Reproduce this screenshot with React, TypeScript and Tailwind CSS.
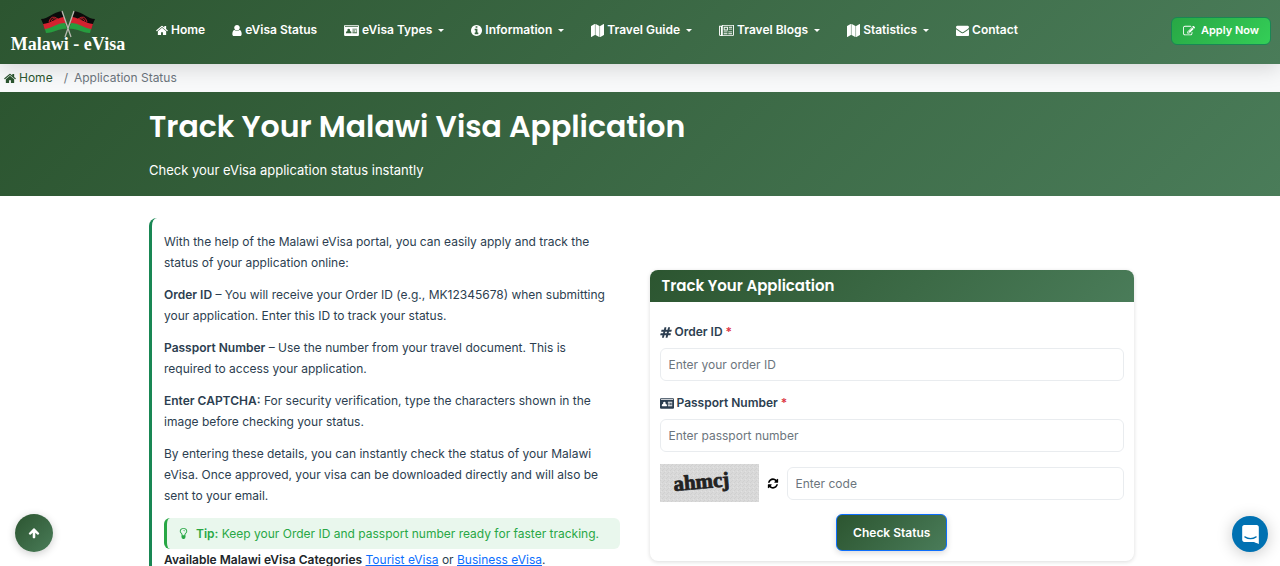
import React from "react";

type IconProps = { className?: string };

function Glyph({ d, className = "size-[13px]", box = "0 0 1792 1792" }: { d: string; className?: string; box?: string }) {
  return (
    <svg viewBox={box} fill="currentColor" fillRule="evenodd" aria-hidden="true" className={`shrink-0 ${className}`}>
      <path d={d} />
    </svg>
  );
}

const HOME =
  "M1472 992v480q0 26-19 45t-45 19h-384v-384h-256v384h-384q-26 0-45-19t-19-45v-480q0-1 .5-3t.5-3l575-474 575 474q1 2 1 6zm223-69l-62 74q-8 9-21 11h-3q-13 0-21-7l-692-577-692 577q-12 8-24 7-13-2-21-11l-62-74q-8-10-7-23.5t11-21.5l719-599q32-26 76-26t76 26l244 204v-195q0-14 9-23t23-9h192q14 0 23 9t9 23v408l219 182q10 8 11 21.5t-7 23.5z";
const USER =
  "M1536 1399q0 109-62.5 187t-150.5 78h-854q-88 0-150.5-78t-62.5-187q0-85 8.5-160.5t31.5-152 58.5-131 94-89 134.5-34.5q131 128 313 128t313-128q76 0 134.5 34.5t94 89 58.5 131 31.5 152 8.5 160.5zm-256-887q0 159-112.5 271.5t-271.500 112.500-271.500-112.500-112.500-271.500 112.500-271.500 271.500-112.500 271.500 112.500 112.500 271.500z";
const INFO =
  "M1152 1376v-160q0-14-9-23t-23-9h-96v-512q0-14-9-23t-23-9h-320q-14 0-23 9t-9 23v160q0 14 9 23t23 9h96v320h-96q-14 0-23 9t-9 23v160q0 14 9 23t23 9h448q14 0 23-9t9-23zm-128-896v-160q0-14-9-23t-23-9h-192q-14 0-23 9t-9 23v160q0 14 9 23t23 9h192q14 0 23-9t9-23zm640 416q0 209-103 385.500t-279.500 279.500-385.500 103-385.500-103-279.500-279.500-103-385.500 103-385.500 279.500-279.500 385.500-103 385.500 103 279.500 279.500 103 385.500z";
const MAP =
  "M512 0q13 0 22.500 9.500t9.500 22.500v1472q0 20-17 28l-480 256q-7 4-15 4-13 0-22.500-9.500T0 1760V288q0-20 17-28L497 4q7-4 15-4zM1760 0q13 0 22.500 9.500t9.500 22.500v1472q0 20-17 28l-480 256q-7 4-15 4-13 0-22.500-9.500t-9.500-22.500V288q0-20 17-28l480-256q7-4 15-4zM640 0q8 0 14 3l512 256q18 10 18 29v1472q0 13-9.500 22.500t-22.500 9.500q-8 0-14-3l-512-256q-18-10-18-29V32q0-13 9.500-22.500T640 0z";
const ENVELOPE =
  "M1792 710v794q0 66-47 113t-113 47h-1472q-66 0-113-47t-47-113v-794q44 49 101 87 362 246 497 345 57 42 92.500 65.500t94.500 48 110 24.500h2q51 0 110-24.500t94.500-48 92.500-65.500q170-123 498-345 57-39 100-87zm0-294q0 79-49 151t-122 123q-376 261-468 325-10 7-42.500 30.500t-54 38-52 32.500-57.500 27-50 9h-2q-23 0-50-9t-57.500-27-52-32.500-54-38-42.500-30.500q-91-64-262-182.500t-205-142.500q-62-42-117-115.500t-55-136.500q0-78 41.500-130t118.500-52h1472q65 0 112.500 47t47.500 113z";
const EDIT =
  "M888 1184l116-116-152-152-116 116v56h96v96h56zm440-720q-16-16-33 1l-350 350q-17 17-1 33t33-1l350-350q17-17 1-33zm80 594v190q0 119-84.500 203.500t-203.500 84.500h-832q-119 0-203.500-84.500t-84.500-203.500v-832q0-119 84.500-203.500t203.500-84.500h832q63 0 117 25 15 7 18 23 3 17-9 29l-49 49q-14 14-32 8-23-6-45-6h-832q-66 0-113 47t-47 113v832q0 66 47 113t113 47h832q66 0 113-47t47-113v-126q0-13 9-22l64-64q15-15 35-7t20 29zm-96-738l288 288-672 672h-288v-288zm444 132l-92 92-288-288 92-92q28-28 68-28t68 28l152 152q28 28 28 68t-28 68z";
const HASH =
  "M991 1024l64-256h-254l-64 256h254zm768-504l-56 224q-7 24-31 24h-327l-64 256h311q15 0 25 12 10 14 6 28l-56 224q-5 24-31 24h-327l-81 328q-7 24-31 24h-224q-16 0-26-12-9-12-6-28l78-312h-254l-81 328q-7 24-31 24h-225q-15 0-25-12-9-12-6-28l78-312h-311q-15 0-25-12-9-12-6-28l56-224q7-24 31-24h327l64-256h-311q-15 0-25-12-10-14-6-28l56-224q5-24 31-24h327l81-328q7-24 32-24h224q15 0 25 12 9 12 6 28l-78 312h254l81-328q7-24 32-24h224q15 0 25 12 9 12 6 28l-78 312h311q15 0 25 12 9 12 6 28z";
const REFRESH =
  "M1639 1056q0 5-1 7-64 268-268 434.500t-478 166.500q-146 0-282.500-55t-243.500-157l-129 129q-19 19-45 19t-45-19-19-45v-448q0-26 19-45t45-19h448q26 0 45 19t19 45-19 45l-137 137q71 66 161 102t187 36q134 0 250-65t186-179q11-17 53-117 8-23 30-23h192q13 0 22.500 9.500t9.500 22.500zm25-800v448q0 26-19 45t-45 19h-448q-26 0-45-19t-19-45 19-45l138-138q-148-137-349-137-134 0-250 65t-186 179q-11 17-53 117-8 23-30 23h-199q-13 0-22.500-9.500t-9.500-22.500v-7q65-268 270-434.500t480-166.500q146 0 284 55.500t245 156.500l130-129q19-19 45-19t45 19 19 45z";
const ARROW_UP =
  "M1675 971q0 51-37 90l-75 75q-38 38-91 38-54 0-90-38l-294-293v704q0 52-37.500 84.500t-90.500 32.500h-128q-53 0-90.500-32.500t-37.500-84.500v-704l-294 293q-36 38-90 38t-90-38l-75-75q-38-38-38-90 0-53 38-91l651-651q35-37 90-37 54 0 91 37l651 651q37 39 37 91z";
const BULB =
  "M1120 576q0 13-9.500 22.500t-22.500 9.500-22.500-9.500-9.500-22.500q0-46-54-71t-106-25q-13 0-22.500-9.500t-9.500-22.500 9.500-22.500 22.500-9.500q50 0 99.500 16t87 54 37.500 90zm160 0q0-72-34.500-134t-90-101.500-123-62-136.500-22.500-136.500 22.500-123 62-90 101.500-34.500 134q0 101 68 180 10 11 30.500 33t30.500 33q128 153 141 298h228q13-145 141-298 10-11 30.500-33t30.500-33q68-79 68-180zm128 0q0 155-103 268-45 49-74.500 87t-59.500 95.500-34 107.500q47 28 47 82 0 37-25 64 25 27 25 64 0 52-45 81 13 23 13 47 0 46-31.500 71t-77.500 25q-20 44-60 70t-87 26-87-26-60-70q-46 0-77.500-25t-31.500-71q0-24 13-47-45-29-45-81 0-37 25-64-25-27-25-64 0-54 47-82-4-50-34-107.500t-59.500-95.500-74.500-87q-103-113-103-268 0-99 44.500-184.500t117-142 164-89 186.500-32.500 186.500 32.500 164 89 117 142 44.500 184.500z";
const ID_CARD =
  "M150 128h1748q150 0 150 150v1236q0 150-150 150H150Q0 1664 0 1514V278q0-150 150-150zM128 256v128h1792V256zM640 640a190 190 0 0 0-150 310q-234 20-234 260 0 70 70 70h628q70 0 70-70 0-240-234-260a190 190 0 0 0-150-310zM1152 640v128h640V640zM1152 896v128h384V896zM1632 896v128h160V896zM1152 1152v128h640v-128z";
const NEWSPAPER =
  "M384 128h1664v1344q0 192-192 192H192Q0 1664 0 1472V256h384zM128 384v1088q0 64 64 64t64-64V384zM512 256v1216q0 34-11 64h1355q64 0 64-64V256zM640 384h576v512H640zM768 512v256h320V512zM1344 384h448v128h-448zM1344 640h448v128h-448zM640 1024h512v128H640zM1280 1024h512v128h-512zM640 1280h512v128H640zM1280 1280h512v128h-512z";

function HomeIcon() {
  return <Glyph d={HOME} box="64 0 1664 1792" className="h-[13px] w-3" />;
}

function IdCard({ className = "h-[13px] w-[15px]" }: IconProps) {
  return <Glyph d={ID_CARD} box="0 0 2048 1792" className={className} />;
}

function Flags() {
  const flag = (
    <>
      <path d="M1 9C8 9 13 2 22 1L24 8C17 9 12 14 4 16Z" fill="#0b0b0b" />
      <path d="M3 14C11 13 16 8 24 7L26 14C18 14 13 19 5 20Z" fill="#d3222f" />
      <path d="M5 19C12 18 17 13 25 13L27 19C19 18 15 23 6 23Z" fill="#279c3f" />
      <path d="M9 12Q11 4 18 9M11 11Q13 7 17 10" fill="none" stroke="#c5222b" strokeWidth="1" />
    </>
  );
  return (
    <svg viewBox="0 0 56 28" className="h-7 w-14" aria-hidden="true">
      <g>{flag}</g>
      <g transform="translate(56 0) scale(-1 1)">{flag}</g>
      <path d="M22 1L31 27M34 1L25 27" stroke="#b8b8b0" strokeWidth="1.3" fill="none" />
    </svg>
  );
}

const navItems: { label: string; icon: React.ReactNode; menu?: boolean }[] = [
  { label: "Home", icon: <HomeIcon /> },
  { label: "eVisa Status", icon: <Glyph d={USER} box="256 0 1280 1792" className="h-[13px] w-[10px]" /> },
  { label: "eVisa Types", icon: <IdCard />, menu: true },
  { label: "Information", icon: <Glyph d={INFO} box="128 0 1536 1792" className="h-[13px] w-[11px]" />, menu: true },
  { label: "Travel Guide", icon: <Glyph d={MAP} />, menu: true },
  { label: "Travel Blogs", icon: <Glyph d={NEWSPAPER} box="0 0 2048 1792" className="h-[13px] w-[15px]" />, menu: true },
  { label: "Statistics", icon: <Glyph d={MAP} />, menu: true },
  { label: "Contact", icon: <Glyph d={ENVELOPE} /> },
];

function Header() {
  const item = "flex items-center gap-[3px] whitespace-nowrap text-xs leading-5 font-semibold";
  return (
    <header className="relative z-10 flex min-h-16 items-center bg-linear-135 from-[#2c5530] to-[#4a7c59] pr-[9px] pl-3 text-white shadow-[0_4px_20px_rgba(0,0,0,0.15)]">
      <a href="#" className="flex w-28 shrink-0 flex-col items-center">
        <Flags />
        <span className="-mt-1 font-['Liberation_Serif',serif] text-lg leading-5 font-bold whitespace-nowrap">Malawi - eVisa</span>
      </a>
      <nav className="mb-1 ml-8 flex flex-1 items-center gap-[27px]">
        {navItems.map(({ label, icon, menu }) =>
          menu ? (
            <button key={label} type="button" className={item}>
              {icon}
              {label}
              <svg viewBox="0 0 6 3" className="ml-[3px] h-[3px] w-[6px]" fill="currentColor" aria-hidden="true">
                <path d="M0 0h6L3 3z" />
              </svg>
            </button>
          ) : (
            <a key={label} href="#" className={item}>
              {icon}
              {label}
            </a>
          )
        )}
      </nav>
      <a
        href="#"
        className="mb-[3px] flex h-7 shrink-0 items-center gap-[6px] rounded-md border border-[#198754] bg-linear-135 from-[#28a745] to-[#34ce57] px-[11px] text-[11px] font-semibold"
      >
        <Glyph d={EDIT} className="size-3" />
        Apply Now
      </a>
    </header>
  );
}

function Breadcrumb() {
  return (
    <nav aria-label="Breadcrumb" className="flex h-7 items-center bg-[#f8f9fa] px-1 text-xs text-[#6c757d]">
      <a href="#" className="flex items-center gap-[3px] text-[#2c5530]">
        <HomeIcon />
        Home
      </a>
      <span className="mr-[6px] ml-[11px]">/</span>
      <span>Application Status</span>
    </nav>
  );
}

function Guide() {
  return (
    <section className="rounded-lg border-l-[3px] border-[#198754] py-[13px] pr-[14px] pl-3 text-xs leading-[21px] text-[#2c3e50]">
      <div className="flex flex-col gap-[11px] pr-2">
        <p>With the help of the Malawi eVisa portal, you can easily apply and track the status of your application online:</p>
        <p>
          <strong className="font-semibold">Order ID</strong> – You will receive your Order ID (e.g., MK12345678) when submitting your application. Enter this ID to track your status.
        </p>
        <p>
          <strong className="font-semibold">Passport Number</strong> – Use the number from your travel document. This is required to access your application.
        </p>
        <p>
          <strong className="font-semibold">Enter CAPTCHA:</strong> For security verification, type the characters shown in the image before checking your status.
        </p>
        <p>By entering these details, you can instantly check the status of your Malawi eVisa. Once approved, your visa can be downloaded directly and will also be sent to your email.</p>
      </div>
      <div className="mt-3 flex items-center rounded-md border-l-[3px] border-[#28a745] bg-[#e9f7ed] px-[10px] py-[5px] text-[#28a745]">
        <Glyph d={BULB} className="mr-[6px] size-[13px]" />
        <p>
          <strong className="font-semibold">Tip:</strong> Keep your Order ID and passport number ready for faster tracking.
        </p>
      </div>
      <p>
        <strong className="font-semibold text-[#212529]">Available Malawi eVisa Categories</strong>{" "}
        <a href="#" className="text-[#0d6efd] underline">Tourist eVisa</a> or{" "}
        <a href="#" className="text-[#0d6efd] underline">Business eVisa</a>.
      </p>
    </section>
  );
}

function Captcha() {
  return (
    <svg viewBox="0 0 99 38" className="h-[38px] w-[99px] shrink-0" role="img" aria-label="Verification code">
      <defs>
        <pattern id="grain" width="4" height="4" patternUnits="userSpaceOnUse">
          <rect width="4" height="4" fill="#d9d9d9" />
          <path d="M0 0h1v1H0zM2 2h1v1H2zM3 1h1v1H3z" fill="#d0d0d0" />
          <path d="M1 3h1v1H1z" fill="#e2e2e2" />
        </pattern>
      </defs>
      <rect width="99" height="38" fill="url(#grain)" />
      <text x="14" y="27" transform="rotate(-5 14 27)" fontFamily="Liberation Serif, serif" fontWeight="700" fontSize="21" fill="#222" stroke="#222" strokeWidth="0.8">
        ahmcj
      </text>
    </svg>
  );
}

const field =
  "h-[33px] w-full min-w-0 rounded-md border border-[#e9ecef] bg-white px-2 text-xs text-[#212529] placeholder:text-[#6c757d]";
const fieldLabel = "flex items-center gap-[3px] text-xs leading-5 font-semibold text-[#2c3e50]";

function TrackForm() {
  return (
    <form className="mt-[52px] overflow-hidden rounded-lg bg-white shadow-[0_1px_4px_rgba(0,0,0,0.14)]" onSubmit={(e) => e.preventDefault()}>
      <h2 className="bg-linear-135 from-[#2c5530] to-[#4a7c59] px-3 py-1 font-['Poppins','Inter',sans-serif] text-[15px] leading-6 font-semibold text-white">
        Track Your Application
      </h2>
      <div className="px-[10px] pt-5 pb-[10px]">
        <label htmlFor="order" className={fieldLabel}>
          <Glyph d={HASH} className="h-[13px] w-3" />
          Order ID <span className="text-[#dc3545]">*</span>
        </label>
        <input id="order" className={`mt-[6px] ${field}`} placeholder="Enter your order ID" />
        <label htmlFor="passport" className={`mt-3 ${fieldLabel}`}>
          <IdCard className="h-[13px] w-[14px]" />
          Passport Number <span className="text-[#dc3545]">*</span>
        </label>
        <input id="passport" className={`mt-[6px] ${field}`} placeholder="Enter passport number" />
        <div className="mt-3 flex items-center">
          <Captcha />
          <button type="button" aria-label="Refresh code" className="mx-2 text-black">
            <Glyph d={REFRESH} className="h-[13px] w-3" />
          </button>
          <input aria-label="Enter code" className={field} placeholder="Enter code" />
        </div>
        <button
          type="submit"
          className="mx-auto mt-3 block h-[37px] rounded-md border border-[#0d6efd] bg-linear-135 from-[#2c5530] to-[#4a7c59] px-4 text-xs font-semibold text-white shadow-[0_2px_6px_rgba(0,0,0,0.15)]"
        >
          Check Status
        </button>
      </div>
    </form>
  );
}

export default function App() {
  return (
    <div className="min-h-screen bg-white font-['Inter',sans-serif]">
      <Header />
      <Breadcrumb />
      <div className="bg-linear-135 from-[#2c5530] to-[#4a7c59] py-4 text-white">
        <div className="mx-auto max-w-[988px] pl-[3px]">
          <h1 className="font-['Poppins','Inter',sans-serif] text-3xl leading-[38px] font-semibold">Track Your Malawi Visa Application</h1>
          <p className="mt-[14px] text-[13px] leading-5">Check your eVisa application status instantly</p>
        </div>
      </div>
      <main className="mx-auto grid max-w-[988px] grid-cols-2 items-start gap-4 pt-[22px] pl-[3px]">
        <Guide />
        <TrackForm />
      </main>
      <button
        type="button"
        aria-label="Back to top"
        className="fixed bottom-[14px] left-[15px] z-20 grid size-[38px] place-items-center rounded-full bg-linear-135 from-[#2c5530] to-[#4a7c59] text-white shadow-[0_2px_8px_rgba(0,0,0,0.2)]"
      >
        <Glyph d={ARROW_UP} className="size-3" />
      </button>
      <button
        type="button"
        aria-label="Open chat"
        className="fixed right-3 bottom-[14px] z-20 grid size-9 place-items-center rounded-full bg-[#0071b2] shadow-[0_2px_16px_rgba(0,0,0,0.22)]"
      >
        <svg viewBox="0 0 28 32" className="h-[19px] w-[17px]" aria-hidden="true">
          <path d="M28 32s-4.714-1.855-8.527-3.34H3.437C1.540 28.660 0 27.026 0 25.013V3.644C0 1.633 1.540 0 3.437 0h21.125c1.898 0 3.437 1.632 3.437 3.645v18.404H28V32z" fill="#fff" />
          <path d="M4.500 20Q14 26 23.500 20" fill="none" stroke="#0071b2" strokeWidth="2" strokeLinecap="round" />
        </svg>
      </button>
    </div>
  );
}
